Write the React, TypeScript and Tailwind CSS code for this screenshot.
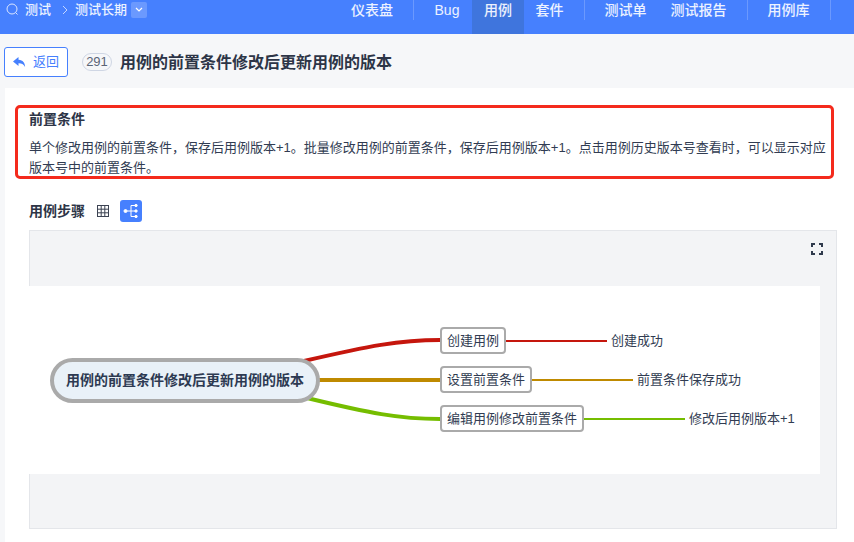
const font = { fontFamily: '"Liberation Sans", "Noto Sans CJK SC", sans-serif' };

function Sep() {
  return <div className="w-px h-5 bg-white/20 self-start" />;
}

function NavItem({ text, w, active, cls = "" }: { text: string; w: string; active?: boolean; cls?: string }) {
  return (
    <div className={`${w} ${cls} h-[34px] shrink-0 pt-[1px] text-center text-[14px] leading-[18px] font-medium text-white/90 ${active ? "bg-[#3f75dd]" : ""}`}>
      {text}
    </div>
  );
}

function MindNode({ cls, text }: { cls: string; text: string }) {
  return (
    <div className={`absolute h-[27px] flex items-center justify-center bg-white border-2 border-[#aaaaaa] rounded-[4px] text-[13px] text-[#313c52] whitespace-nowrap ${cls}`}>
      {text}
    </div>
  );
}

function Label({ cls, text }: { cls: string; text: string }) {
  return <div className={`absolute text-[13px] leading-[20px] text-[#313c52] whitespace-nowrap ${cls}`}>{text}</div>;
}

export default function App() {
  return (
    <div className="w-[854px] h-[542px] overflow-hidden bg-[#f6f7f9] flex flex-col" style={font}>
      <header className="h-[34px] shrink-0 bg-[#4680fe] flex justify-between overflow-hidden">
        <div className="flex items-start pl-[6px] pt-[1px] text-white/90 text-[13px] leading-[18px] font-medium">
          <svg width="14" height="14" viewBox="0 0 14 14" fill="none" stroke="#dbe6ff" strokeWidth="1" className="mt-[2px]">
            <circle cx="6" cy="6" r="5" />
            <path d="M9.5 9.5l2 2" />
          </svg>
          <span className="ml-[5px]">测试</span>
          <svg width="8" height="10" viewBox="0 0 8 10" fill="none" stroke="#c4d6ff" strokeWidth="1" className="ml-[10px] mt-[4px]">
            <path d="M2 1l4 4-4 4" />
          </svg>
          <span className="ml-[6px]">测试长期</span>
          <span className="ml-[4px] mt-[1px] w-4 h-4 rounded-[2px] bg-white/20 flex items-center justify-center">
            <svg width="8" height="6" viewBox="0 0 8 6" fill="none" stroke="white" strokeWidth="1.2">
              <path d="M1 1l3 3 3-3" />
            </svg>
          </span>
        </div>
        <nav className="flex w-[515px] shrink-0">
          <NavItem text="仪表盘" w="w-[66px]" />
          <div className="ml-2"><Sep /></div>
          <NavItem text="Bug" w="w-[50px]" cls="ml-2" />
          <NavItem text="用例" w="w-[52px]" active />
          <NavItem text="套件" w="w-[51px]" />
          <div className="ml-[9px]"><Sep /></div>
          <NavItem text="测试单" w="w-[65px]" cls="ml-2" />
          <NavItem text="测试报告" w="w-[81px]" />
          <div className="ml-2"><Sep /></div>
          <NavItem text="用例库" w="w-[65px]" cls="ml-2" />
          <div className="ml-[9px]"><Sep /></div>
          <div className="ml-[22px] shrink-0 text-[14px] leading-[18px] pt-[1px] font-medium text-white/90 whitespace-nowrap">自动化</div>
        </nav>
      </header>

      <div className="h-[54px] shrink-0 flex items-center pl-1 pt-[2px]">
        <button className="w-[64px] h-[30px] border border-[#4680fe] rounded-[3px] bg-white flex items-center justify-center gap-[7px] text-[13px] text-[#4680fe]">
          <svg width="13" height="11" viewBox="0 0 13 11" fill="#4680fe">
            <path d="M5.5 0L0 4.6l5.5 4.4V6.3c2.8-.1 5 .7 6.6 3.7C12 6 10 3 5.5 2.8z" />
          </svg>
          返回
        </button>
        <span className="ml-[14px] w-[30px] h-[18px] rounded-full border border-[#cfd6e4] text-[13px] leading-[16px] text-center text-[#5b6577]">291</span>
        <h1 className="ml-2 mt-[1px] text-[16px] font-semibold text-[#2d3547]">用例的前置条件修改后更新用例的版本</h1>
      </div>

      <main className="flex-1 ml-[5px] bg-white pt-[17px] pl-[10px] pr-5">
        <section className="h-[74px] border-[3px] border-[#f42a1c] rounded-[5px] pl-[11px] pr-0 pt-[1px]">
          <h2 className="text-[14px] leading-[20px] font-semibold text-[#2d3547]">前置条件</h2>
          <p className="mt-[9px] text-[13px] leading-[20px] text-[#313c52]">
            单个修改用例的前置条件，保存后用例版本+1。批量修改用例的前置条件，保存后用例版本+1。点击用例历史版本号查看时，可以显示对应版本号中的前置条件。
          </p>
        </section>

        <div className="mt-[21px] ml-[14px] h-[22px] flex items-center">
          <h2 className="text-[14px] font-semibold text-[#2d3547]">用例步骤</h2>
          <svg width="12" height="12" viewBox="0 0 12 12" fill="none" stroke="#3c4353" strokeWidth="1" className="ml-3">
            <rect x="0.5" y="0.5" width="11" height="11" />
            <path d="M0.5 4.2h11M0.5 7.8h11M4.2 0.5v11M7.8 0.5v11" />
          </svg>
          <span className="ml-[11px] w-[22px] h-[22px] rounded-[3px] bg-[#4680fe] flex items-center justify-center">
            <svg width="16" height="14" viewBox="0 0 16 14" fill="none" stroke="white" strokeWidth="1">
              <circle cx="2.5" cy="7" r="1.5" fill="white" />
              <path d="M4 7h4M8 1.5v11M8 1.5h4M8 7h4M8 12.5h4" />
              <circle cx="13" cy="1.5" r="1.2" fill="white" />
              <circle cx="13" cy="7" r="1.2" fill="white" />
              <circle cx="13" cy="12.5" r="1.2" fill="white" />
            </svg>
          </span>
        </div>

        <div className="relative mt-[8px] ml-[14px] w-[808px] h-[299px] bg-[#f3f4f6] border border-[#e4e6ea]">
          <svg width="12" height="12" viewBox="0 0 12 12" fill="none" stroke="#2f3a4c" strokeWidth="2" className="absolute left-[781px] top-[12px]">
            <path d="M1 4V1h3M8 1h3v3M11 8v3H8M4 11H1V8" />
          </svg>
          <div className="absolute -left-px top-[55px] w-[791px] h-[188px] bg-white">
            <svg width="791" height="188" className="absolute inset-0" fill="none">
              <path d="M275 75 C340 60 370 54 411 54" stroke="#c5160d" strokeWidth="4" />
              <path d="M285 94 H411" stroke="#bf8a00" strokeWidth="4" />
              <path d="M278 112 C340 127 370 133 411 133" stroke="#75bd00" strokeWidth="4" />
              <path d="M477 55 H578" stroke="#c5160d" strokeWidth="2" />
              <path d="M503 94 H604" stroke="#bf8a00" strokeWidth="2" />
              <path d="M555 133 H656" stroke="#75bd00" strokeWidth="2" />
            </svg>
            <div className="absolute left-[21px] top-[72px] w-[270px] h-[45px] rounded-full bg-[#e9f1f8] border-4 border-[#aaaaaa] flex items-center justify-center text-[14px] font-semibold text-[#2d3a52] whitespace-nowrap">
              用例的前置条件修改后更新用例的版本
            </div>
            <MindNode cls="left-[411px] top-[41px] w-[66px]" text="创建用例" />
            <MindNode cls="left-[411px] top-[80px] w-[92px]" text="设置前置条件" />
            <MindNode cls="left-[411px] top-[119px] w-[144px]" text="编辑用例修改前置条件" />
            <Label cls="left-[582px] top-[45px]" text="创建成功" />
            <Label cls="left-[608px] top-[84px]" text="前置条件保存成功" />
            <Label cls="left-[660px] top-[123px]" text="修改后用例版本+1" />
          </div>
        </div>
      </main>
    </div>
  );
}
